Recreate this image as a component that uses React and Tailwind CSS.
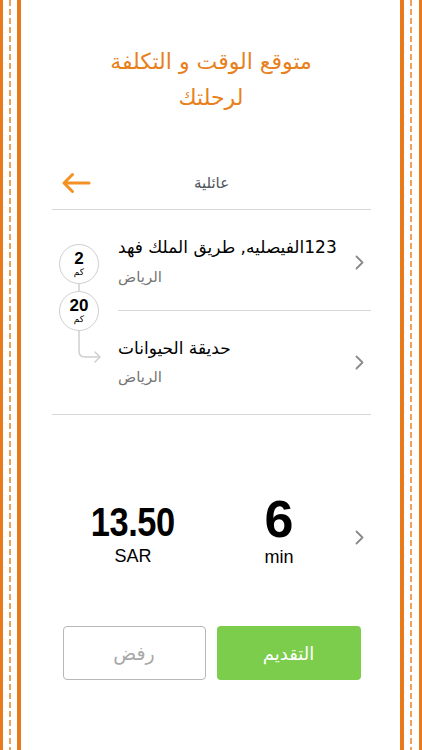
import React from "react";

function Strip({ side }) {
  const dash = (
    <div className="w-[2px] h-full bg-[repeating-linear-gradient(to_bottom,#eea25e_0px,#eea25e_6px,transparent_6px,transparent_9px)]" />
  );
  if (side === "left") {
    return (
      <div className="flex h-full shrink-0">
        <div className="w-[3px] h-full bg-[#e8791c]" />
        <div className="w-[6px]" />
        {dash}
        <div className="w-[6px]" />
        <div className="w-[4px] h-full bg-[#e8791c]" />
      </div>
    );
  }
  return (
    <div className="flex h-full shrink-0">
      <div className="w-[4px] h-full bg-[#e8791c]" />
      <div className="w-[6px]" />
      {dash}
      <div className="w-[7px]" />
      <div className="w-[3px] h-full bg-[#e8791c]" />
    </div>
  );
}

function Chevron() {
  return (
    <svg width="9" height="15" viewBox="0 0 9 15" fill="none">
      <polyline points="1.5,1.5 7.5,7.5 1.5,13.5" stroke="#8a8a8a" strokeWidth="1.8" strokeLinecap="round" strokeLinejoin="round" />
    </svg>
  );
}

function Circle({ num, top }) {
  return (
    <div
      className="absolute left-[7px] w-[40px] h-[40px] rounded-full border-[1.5px] border-[#cfcfcf] bg-white flex flex-col items-center justify-center"
      style={{ top }}
    >
      <span className="text-[17px] font-bold leading-[16px] text-black font-['Liberation_Sans',sans-serif]">{num}</span>
      <span className="text-[9px] leading-[10px] text-black font-['DejaVu_Sans',sans-serif]">كم</span>
    </div>
  );
}

export default function App() {
  return (
    <div className="flex w-[422px] h-[750px] bg-white font-['Liberation_Sans','DejaVu_Sans',sans-serif] overflow-hidden">
      <div className="w-[22px] h-full flex justify-start">
        <Strip side="left" />
      </div>
      <div className="flex-1 flex flex-col">
        <div className="pt-[44px] text-center text-[#e8801c] text-[22px] leading-[36px] font-['DejaVu_Sans',sans-serif]">
          <div dir="rtl">متوقع الوقت و التكلفة</div>
          <div dir="rtl">لرحلتك</div>
        </div>

        <div className="ml-[30px] mr-[29px] flex flex-col">
          <div className="mt-[41px] h-[53px] grid grid-cols-[1fr_auto_1fr] items-center border-b border-[#d6d6d6]">
            <div className="flex items-center pl-[9px]">
              <svg width="30" height="22" viewBox="0 0 30 22" fill="none">
                <path d="M28 11H3M11.5 2.5L3 11l8.5 8.5" stroke="#f39222" strokeWidth="3" strokeLinecap="round" strokeLinejoin="round" />
              </svg>
            </div>
            <div dir="rtl" className="text-[15px] text-[#4f5560] font-['DejaVu_Sans',sans-serif]">عائلية</div>
            <div />
          </div>

          <div className="flex border-b border-[#d6d6d6]">
            <div className="relative w-[66px] shrink-0">
              <svg className="absolute left-0 top-0" width="66" height="205" viewBox="0 0 66 205" fill="none">
                <line x1="27" y1="74" x2="27" y2="82" stroke="#cfcfcf" strokeWidth="1.5" />
                <path d="M27 120V141q0 6 6 6H48" stroke="#cfcfcf" strokeWidth="1.5" />
                <path d="M43 142l5 5-5 5" stroke="#cfcfcf" strokeWidth="1.5" strokeLinejoin="round" strokeLinecap="round" />
              </svg>
              <Circle num="2" top={34} />
              <Circle num="20" top={81} />
            </div>
            <div className="flex-1 flex flex-col">
              <div className="pt-[25px] pb-[21px] border-b border-[#d6d6d6] flex items-center">
                <div className="flex-1 flex flex-col items-start font-['DejaVu_Sans',sans-serif]">
                  <span dir="rtl" className="text-[17px] leading-[24px] text-black">123الفيصليه, طريق الملك فهد</span>
                  <span dir="rtl" className="mt-[6px] text-[15px] leading-[24px] text-[#767676]">الرياض</span>
                </div>
                <div className="pr-[7px]"><Chevron /></div>
              </div>
              <div className="pt-[25px] pb-[25px] flex items-center">
                <div className="flex-1 flex flex-col items-start font-['DejaVu_Sans',sans-serif]">
                  <span dir="rtl" className="text-[17px] leading-[24px] text-black">حديقة الحيوانات</span>
                  <span dir="rtl" className="mt-[5px] text-[15px] leading-[24px] text-[#767676]">الرياض</span>
                </div>
                <div className="pr-[7px]"><Chevron /></div>
              </div>
            </div>
          </div>

          <div className="mt-[78px] grid grid-cols-[162px_130px_1fr] items-start">
            <div className="pt-[9px] flex flex-col items-center">
              <span className="text-[40px] leading-[40px] font-bold text-black scale-x-[0.86] tracking-[-0.5px]">13.50</span>
              <span className="mt-[4px] text-[18px] leading-[20px] text-black">SAR</span>
            </div>
            <div className="flex flex-col items-center">
              <span className="text-[52px] leading-[52px] font-bold text-black">6</span>
              <span className="mt-[2px] text-[18px] leading-[20px] text-black">min</span>
            </div>
            <div className="flex justify-end pr-[7px] pt-[37px]"><Chevron /></div>
          </div>

          <div className="mt-[59px] flex justify-center gap-[11px]">
            <div className="w-[143px] h-[54px] rounded-[4px] border-[1.5px] border-[#b8b8b8] flex items-center justify-center">
              <span dir="rtl" className="text-[19px] text-[#a8a8a8] font-['DejaVu_Sans',sans-serif]">رفض</span>
            </div>
            <div className="w-[144px] h-[54px] rounded-[4px] bg-[#7ccd4c] flex items-center justify-center">
              <span dir="rtl" className="text-[18px] text-white font-['DejaVu_Sans',sans-serif]">التقديم</span>
            </div>
          </div>
        </div>
      </div>
      <div className="w-[22px] h-full flex justify-end">
        <Strip side="right" />
      </div>
    </div>
  );
}
